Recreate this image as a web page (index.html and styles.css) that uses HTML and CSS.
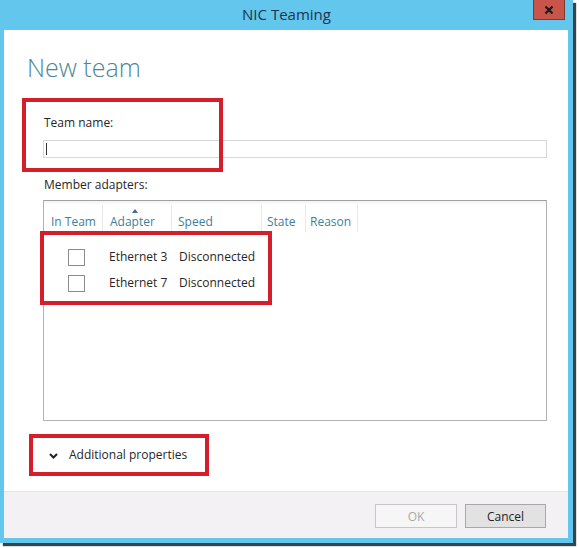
FILE: index.html
```html
<!DOCTYPE html>
<html>
<head>
  <meta charset="UTF-8">
  <title>NIC Teaming</title>
  <link rel="stylesheet" href="styles.css">
</head>
<body>
  <div class="window">
    <div class="titlebar">
      <span class="title">NIC Teaming</span>
      <button class="close-btn" aria-label="Close">
        <svg width="10" height="10" viewBox="0 0 10 10">
          <path d="M1.5 1.5 L8.5 8.5 M8.5 1.5 L1.5 8.5" stroke="#1a1a1a" stroke-width="2.2" fill="none"/>
        </svg>
      </button>
    </div>

    <div class="client">
      <div class="form">
        <h1>New team</h1>

        <div class="label first">Team name:</div>
        <div class="textbox"><span class="caret"></span></div>

        <div class="label">Member adapters:</div>
        <div class="listbox">
          <div class="list-head">
            <div class="col col-team">In Team</div>
            <div class="col col-adapter sorted">Adapter</div>
            <div class="col col-speed">Speed</div>
            <div class="col col-state">State</div>
            <div class="col col-reason">Reason</div>
          </div>
          <div class="list-row">
            <div class="cell cell-team"><span class="checkbox"></span></div>
            <div class="cell">Ethernet 3</div>
            <div class="cell">Disconnected</div>
          </div>
          <div class="list-row">
            <div class="cell cell-team"><span class="checkbox"></span></div>
            <div class="cell">Ethernet 7</div>
            <div class="cell">Disconnected</div>
          </div>
        </div>

        <div class="expander">
          <svg class="chevron" width="9" height="6" viewBox="0 0 9 6">
            <path d="M1 1 L4.5 4.5 L8 1" stroke="#222" stroke-width="2" fill="none"/>
          </svg>
          <span>Additional properties</span>
        </div>
      </div>

      <div class="footer">
        <button class="btn" disabled>OK</button>
        <button class="btn btn-cancel">Cancel</button>
      </div>
    </div>

    <!-- red highlight annotations drawn over the dialog -->
    <div class="mark mark-name"></div>
    <div class="mark mark-rows"></div>
    <div class="mark mark-props"></div>
  </div>
</body>
</html>
```

FILE: styles.css
```css
:root {
  --frame: #62c6ed;
  --heading: #4f8796;
  --column: #3e7f9b;
  --mark: #d41f2a;
  --text: #262626;
}

body {
  margin: 0;
  width: 579px;
  height: 548px;
  background: #ffffff;
  font-family: "Open Sans", "Noto Sans", sans-serif;
  font-size: 12px;
  color: var(--text);
}

.window {
  position: relative;
  width: 573px;
  height: 543px;
  background: var(--frame);
  box-shadow: 3px 3px 1px #35454c;
  display: flex;
  flex-direction: column;
}

.titlebar {
  position: relative;
  height: 30px;
  display: flex;
  align-items: center;
  justify-content: center;
}

.title {
  font-size: 15px;
  color: #1d3350;
  margin-top: -2px;
}

.close-btn {
  position: absolute;
  top: 0;
  right: 8px;
  width: 32px;
  height: 20px;
  padding: 0;
  border: 1px solid #7a3a36;
  border-top: none;
  background: #c9544a;
  display: flex;
  align-items: center;
  justify-content: center;
}

.client {
  flex: 1;
  margin: 0 5px 5px 4px;
  background: #ffffff;
  display: flex;
  flex-direction: column;
}

.form {
  flex: 1;
  padding: 22px 21px 0 39px;
}

h1 {
  margin: 0 0 0 -16px;
  font-size: 25px;
  line-height: 30px;
  font-weight: 300;
  color: var(--heading);
}

.label {
  line-height: 16px;
  margin-top: 19px;
  padding-left: 1px;
}

.label.first {
  margin-top: 33px;
}

.textbox {
  margin-top: 9px;
  height: 16px;
  border: 1px solid #d4d8da;
  display: flex;
  align-items: center;
  padding-left: 2px;
}

.caret {
  width: 1px;
  height: 12px;
  background: #333;
}

.listbox {
  margin-top: 7px;
  height: 219px;
  border: 1px solid #b4b4b4;
  border-top-color: #a0a0a0;
  background: linear-gradient(#f2f2f2, #ffffff 4px);
}

.list-head {
  display: grid;
  grid-template-columns: 59px 69px 90px 44px 52px;
  margin-top: 4px;
}

.col {
  position: relative;
  height: 27px;
  padding: 9px 0 0 7px;
  box-sizing: border-box;
  line-height: 16px;
  color: var(--column);
  border-right: 1px solid #e6e8ea;
}

.col-speed {
  padding-left: 6px;
}

.col-state {
  padding-left: 5px;
}

.col-reason {
  padding-left: 4px;
}

.sorted::before {
  content: "";
  position: absolute;
  top: 4px;
  left: 29px;
  border-left: 3px solid transparent;
  border-right: 3px solid transparent;
  border-bottom: 4px solid #3a6f86;
}

.list-head + .list-row {
  margin-top: 12px;
}

.list-row {
  display: grid;
  grid-template-columns: 59px 69px 90px;
  height: 26px;
  align-items: center;
}

.cell {
  padding-left: 6px;
  line-height: 16px;
  white-space: nowrap;
}

.cell + .cell + .cell {
  padding-left: 7px;
}

.cell-team {
  padding-left: 24px;
  display: flex;
}

.checkbox {
  width: 15px;
  height: 15px;
  border: 1px solid #8c8c8c;
  background: #fff;
}

.expander {
  margin-top: 26px;
  display: flex;
  align-items: center;
  line-height: 16px;
}

.chevron {
  margin: 1px 11px 0 6px;
}

.footer {
  height: 47px;
  border-top: 1px solid #e7e5e9;
  background: #f4f1f5;
  display: flex;
  justify-content: flex-end;
  align-items: flex-start;
  gap: 8px;
  padding: 12px 22px 0 0;
  box-sizing: border-box;
}

.btn {
  width: 82px;
  height: 24px;
  border: 1px solid #c6c6c6;
  background: #f6f6f6;
  font-family: "Open Sans", "Noto Sans", sans-serif;
  font-size: 12px;
  color: #a8a8a8;
  padding: 0;
}

.btn-cancel {
  width: 81px;
  border-color: #a8a8a8;
  background: #e2e2e2;
  color: #222;
}

.mark {
  position: absolute;
  border: 4px solid var(--mark);
  box-sizing: border-box;
}

.mark-name {
  left: 22px;
  top: 98px;
  width: 201px;
  height: 74px;
}

.mark-rows {
  left: 40px;
  top: 231px;
  width: 232px;
  height: 74px;
}

.mark-props {
  left: 29px;
  top: 434px;
  width: 180px;
  height: 42px;
}
```
